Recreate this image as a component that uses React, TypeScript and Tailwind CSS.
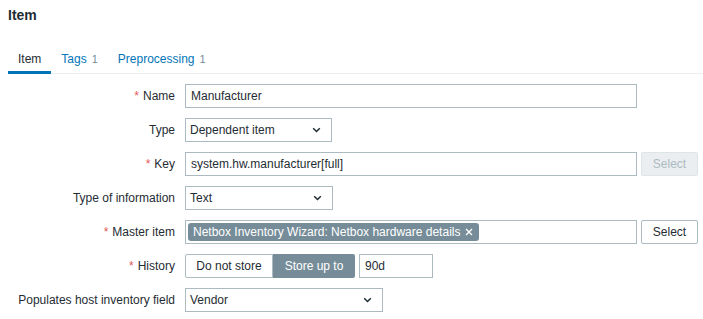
const Chevron = () => (
  <svg width="9" height="6" viewBox="0 0 9 6" className="shrink-0">
    <path d="M1.2 1.2l3.3 3.3 3.3-3.3" fill="none" stroke="#1f2c33" strokeWidth="1.5" />
  </svg>
);

const Req = () => <span className="text-[#e45959] mr-[4px]">*</span>;

const Label = ({ text, req }: { text: string; req?: boolean }) => (
  <div className="flex items-center justify-end h-[24px] whitespace-nowrap">
    {req && <Req />}
    {text}
  </div>
);

const Select = ({ value, w }: { value: string; w: string }) => (
  <div className={`${w} h-[24px] border border-[#acbbc2] bg-white flex items-center justify-between pl-[4px] pr-[10px]`}>
    <span>{value}</span>
    <Chevron />
  </div>
);

export default function App() {
  return (
    <div className="w-[703px] h-[319px] bg-white text-[12px] text-[#1f2c33] font-['Liberation_Sans',Arial,sans-serif] overflow-hidden">
      <h1 className="pl-[8px] pt-[6px] text-[14px] leading-[18px] font-bold">Item</h1>

      {/* tabs */}
      <div className="mt-[20px] ml-[8px] flex border-b border-[#ebeef0]">
        <div className="px-[10px] pt-[8px] pb-[5px] leading-[14px] border-b-[3px] border-[#0275b8] -mb-px">Item</div>
        <div className="px-[10px] pt-[8px] pb-[5px] leading-[14px] text-[#0275b8]">
          Tags<span className="ml-[5px] text-[11px] text-[#768d99]">1</span>
        </div>
        <div className="px-[10px] pt-[8px] pb-[5px] leading-[14px] text-[#0275b8]">
          Preprocessing<span className="ml-[5px] text-[11px] text-[#768d99]">1</span>
        </div>
      </div>

      {/* form */}
      <div className="mt-[10px] grid grid-cols-[175px_1fr] gap-x-[10px] gap-y-[10px]">
        <Label text="Name" req />
        <div className="w-[452px] h-[24px] border border-[#acbbc2] flex items-center px-[5px]">Manufacturer</div>

        <Label text="Type" />
        <Select value="Dependent item" w="w-[147px]" />

        <Label text="Key" req />
        <div className="flex gap-[4px]">
          <div className="w-[452px] h-[24px] border border-[#acbbc2] flex items-center px-[5px]">system.hw.manufacturer[full]</div>
          <div className="w-[57px] h-[24px] border border-[#dfe4e7] bg-[#ebeef0] rounded-[2px] text-[#acbbc2] flex items-center justify-center">Select</div>
        </div>

        <Label text="Type of information" />
        <Select value="Text" w="w-[148px]" />

        <Label text="Master item" req />
        <div className="flex gap-[4px]">
          <div className="w-[452px] h-[24px] border border-[#acbbc2] flex items-center pl-[2px]">
            <div className="h-[18px] bg-[#768d99] text-white rounded-[3px] flex items-center pl-[5px] pr-[6px] whitespace-nowrap">
              Netbox Inventory Wizard: Netbox hardware details
              <svg width="8" height="8" viewBox="0 0 8 8" className="ml-[5px]">
                <path d="M1 1l6 6M7 1L1 7" stroke="#ffffff" strokeWidth="1.4" />
              </svg>
            </div>
          </div>
          <div className="w-[57px] h-[24px] border border-[#acbbc2] bg-white rounded-[2px] flex items-center justify-center">Select</div>
        </div>

        <Label text="History" req />
        <div className="flex gap-[4px]">
          <div className="flex">
            <div className="w-[88px] h-[24px] border border-[#acbbc2] rounded-l-[2px] flex items-center justify-center">Do not store</div>
            <div className="w-[82px] h-[24px] bg-[#768d99] text-white rounded-r-[2px] flex items-center justify-center">Store up to</div>
          </div>
          <div className="w-[74px] h-[24px] border border-[#acbbc2] flex items-center px-[5px]">90d</div>
        </div>

        <Label text="Populates host inventory field" />
        <Select value="Vendor" w="w-[198px]" />
      </div>
    </div>
  );
}
